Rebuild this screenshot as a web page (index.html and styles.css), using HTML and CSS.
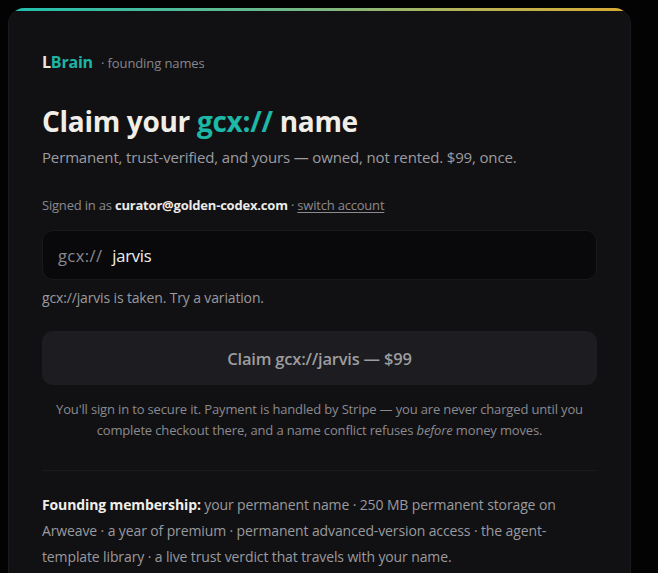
FILE: index.html
```html
<!DOCTYPE html>
<html lang="en">
<head>
<meta charset="utf-8">
<title>LBrain · founding names</title>
<link rel="stylesheet" href="styles.css">
</head>
<body>
<main class="card">
  <div class="brand"><span class="brand-l">L</span><span class="brand-b">Brain</span><span class="brand-sub">· founding names</span></div>
  <h1 class="title">Claim your <span class="accent">gcx://</span> name</h1>
  <p class="lead">Permanent, trust-verified, and yours — owned, not rented. $99, once.</p>
  <p class="signed">Signed in as <strong>curator@golden-codex.com</strong> · <a class="switch" href="#">switch account</a></p>
  <div class="field"><span class="prefix">gcx://</span><span class="value">jarvis</span></div>
  <p class="status">gcx://jarvis is taken. Try a variation.</p>
  <button class="claim" type="button">Claim gcx://jarvis — $99</button>
  <p class="note">You'll sign in to secure it. Payment is handled by Stripe — you are never charged until you complete checkout there, and a name conflict refuses <em>before</em> money moves.</p>
  <hr class="divider">
  <p class="perks"><strong>Founding membership:</strong> your permanent name · 250 MB permanent storage on Arweave · a year of premium · permanent advanced-version access · the agent-template library · a live trust verdict that travels with your name.</p>
</main>
</body>
</html>
```
FILE: styles.css
```css
html, body {
  margin: 0;
  padding: 0;
  background: #030304;
}
body {
  padding: 8px 0 0 8px;
  font-family: "Open Sans", "Noto Sans", sans-serif;
  color: #9b9b9f;
  overflow: hidden;
  height: 565px;
}
.card {
  width: 555px;
  padding: 43px 33px 40px 33px;
  background: #111114;
  border: 1px solid #1b1b1f;
  border-top: none;
  border-radius: 16px;
  position: relative;
  overflow: hidden;
}
.card::before {
  content: "";
  position: absolute;
  left: 0;
  right: 0;
  top: 0;
  height: 3px;
  background: linear-gradient(90deg, #1fbfae 0%, #6fb88a 45%, #b9b354 75%, #d8aa33 100%);
}
.brand {
  display: flex;
  align-items: baseline;
  font-size: 16px;
  font-weight: 700;
  letter-spacing: -0.2px;
  line-height: 22px;
}
.brand-l { color: #e9e7e2; }
.brand-b { color: #1db4a4; }
.brand-sub {
  font-size: 13px;
  font-weight: 400;
  color: #86868b;
  margin-left: 8px;
  letter-spacing: -0.1px;
}
.title {
  margin: 28px 0 0 0;
  font-size: 28px;
  line-height: 38px;
  font-weight: 700;
  color: #f1eee8;
  letter-spacing: -0.3px;
}
.accent { color: #1db8a7; }
.lead {
  margin: 6px 0 0 0;
  font-size: 15px;
  line-height: 22px;
  color: #9c9ca0;
  letter-spacing: -0.15px;
}
.signed {
  margin: 27px 0 0 0;
  font-size: 13px;
  line-height: 20px;
  color: #8a8a8f;
  letter-spacing: -0.2px;
}
.signed strong {
  color: #ecebe8;
  font-weight: 700;
}
.switch {
  color: #8a8a8f;
  text-decoration: underline;
  text-underline-offset: 2px;
}
.field {
  margin-top: 15px;
  height: 50px;
  box-sizing: border-box;
  display: flex;
  align-items: center;
  gap: 10px;
  padding: 0 15px;
  background: #09090b;
  border: 1px solid #19191d;
  border-radius: 11px;
  font-size: 16.5px;
  letter-spacing: -0.2px;
}
.prefix { color: #8a8a8f; letter-spacing: 0.4px; }
.value { color: #f1f0ed; }
.status {
  margin: 8px 0 0 0;
  font-size: 14px;
  line-height: 20px;
  color: #9a9a9e;
  letter-spacing: -0.15px;
}
.claim {
  display: block;
  width: 100%;
  margin-top: 23px;
  height: 54px;
  border: none;
  border-radius: 11px;
  background: #1c1c21;
  color: #9d9d9f;
  font-family: inherit;
  font-size: 16.5px;
  font-weight: 600;
  letter-spacing: -0.2px;
}
.note {
  margin: 14px 0 0 0;
  text-align: center;
  font-size: 13px;
  line-height: 21px;
  color: #8a8a8f;
  letter-spacing: -0.15px;
}
.divider {
  margin: 29px 0 0 0;
  border: none;
  border-top: 1px solid #1b1b1f;
}
.perks {
  margin: 21px 0 0 0;
  font-size: 14px;
  line-height: 26px;
  color: #9a9a9e;
  letter-spacing: -0.12px;
}
.perks strong {
  color: #f1eee8;
  font-weight: 700;
}
```
